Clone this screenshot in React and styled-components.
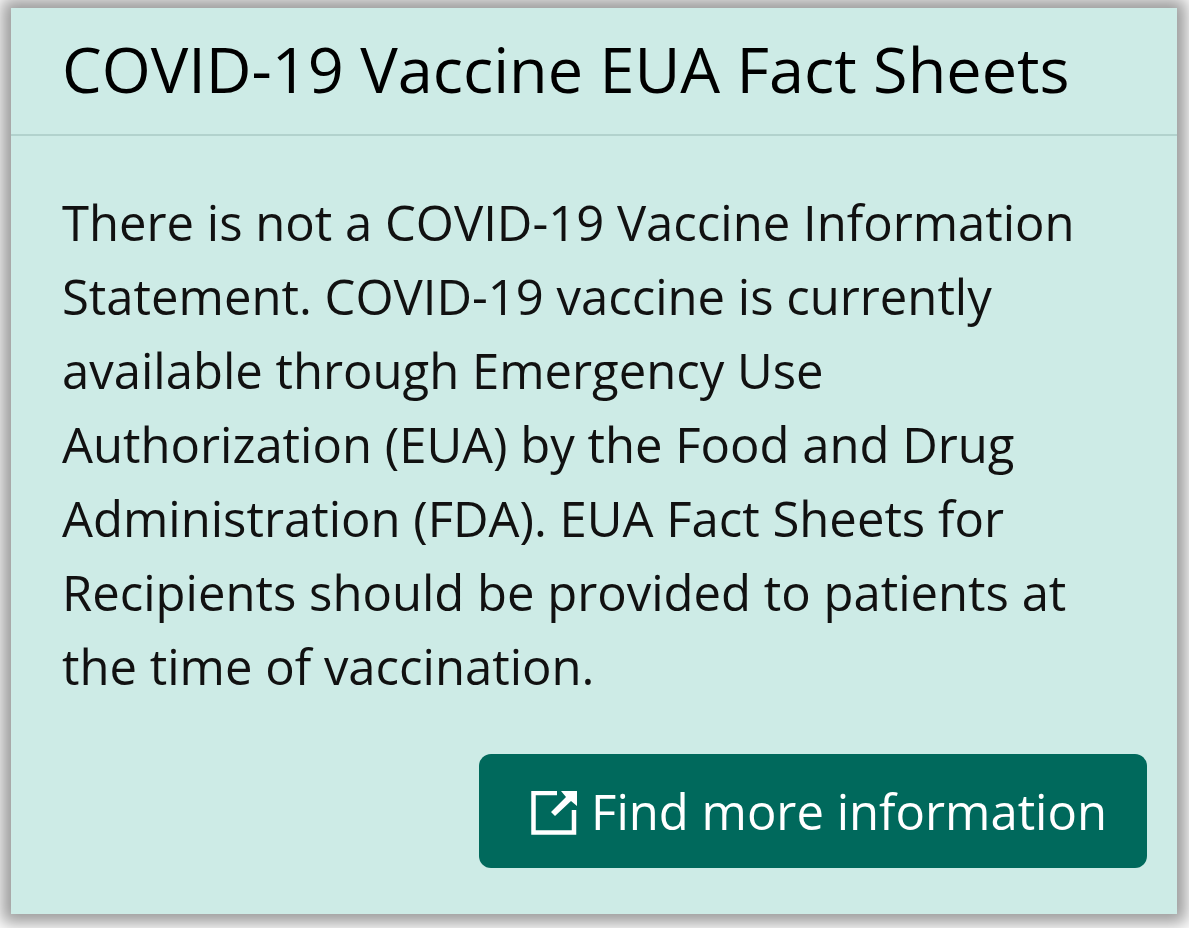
import React from 'react';
import styled, { createGlobalStyle } from 'styled-components';

const GlobalStyle = createGlobalStyle`
  * {
    box-sizing: border-box;
  }

  body {
    margin: 0;
    background: #fff;
    color: #000;
    font-family: 'Open Sans', 'Noto Sans', sans-serif;
  }
`;

const Page = styled.main`
  padding: 8px 12px 14px 11px;
  overflow: hidden;
`;

const Card = styled.section`
  background: #cdebe6;
  box-shadow: 0 0 16px 9px rgba(0, 0, 0, 0.4);
`;

const CardHeader = styled.header`
  padding: 21px 51px 25px;
  border-bottom: 2px solid #b2d2cd;
`;

const CardTitle = styled.h2`
  margin: 0;
  font-size: 63px;
  font-weight: 400;
  line-height: 80px;
`;

const CardBody = styled.div`
  padding: 49px 51px 0;
`;

const CardText = styled.p`
  margin: 0;
  color: #111;
  font-size: 49px;
  line-height: 74px;
`;

const CardActions = styled.footer`
  display: flex;
  justify-content: flex-end;
  padding: 51px 30px 46px;
`;

const ActionLink = styled.a`
  display: inline-flex;
  align-items: center;
  gap: 14px;
  padding: 20px 40px 20px 52px;
  border-radius: 12px;
  background: #00695c;
  color: #fff;
  font-size: 49px;
  line-height: 74px;
  text-decoration: none;
  white-space: nowrap;
`;

const LinkIcon = styled.svg`
  flex: none;
  width: 46px;
  height: 44px;
  margin-top: 4px;
`;

function ExternalLinkIcon() {
  return (
    <LinkIcon viewBox="0 0 46 44" aria-hidden="true">
      <path
        d="M26 2H2.500V41.500H43V19"
        fill="none"
        stroke="#fff"
        strokeWidth="4.500"
      />
      <path d="M30 0H46V15L40 10L24 25L20 21L35 6Z" fill="#fff" />
    </LinkIcon>
  );
}

export default function App() {
  return (
    <>
      <GlobalStyle />
      <Page>
        <Card aria-labelledby="fact-sheets-title">
          <CardHeader>
            <CardTitle id="fact-sheets-title">COVID-19 Vaccine EUA Fact Sheets</CardTitle>
          </CardHeader>
          <CardBody>
            <CardText>
              There is not a COVID-19 Vaccine Information Statement. COVID-19 vaccine is
              currently available through Emergency Use Authorization (EUA) by the Food and
              Drug Administration (FDA). EUA Fact Sheets for Recipients should be provided to
              patients at the time of vaccination.
            </CardText>
          </CardBody>
          <CardActions>
            <ActionLink href="#more-information">
              <ExternalLinkIcon />
              Find more information
            </ActionLink>
          </CardActions>
        </Card>
      </Page>
    </>
  );
}
